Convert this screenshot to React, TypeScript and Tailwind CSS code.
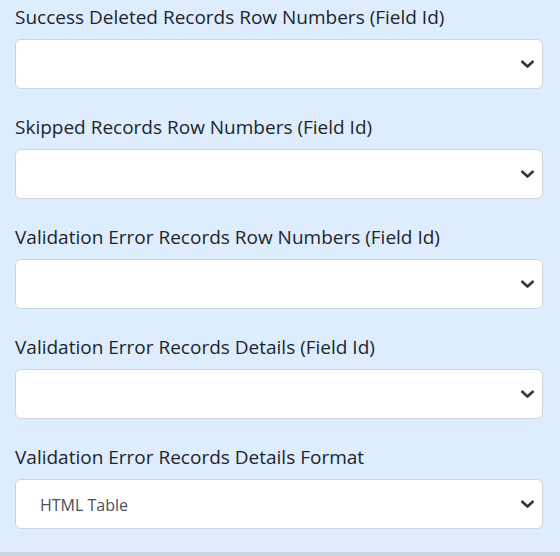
import React from "react";

const Chevron = () => (
  <svg width="15" height="10" viewBox="0 0 15 10" className="absolute right-[7px] top-1/2 -translate-y-1/2">
    <path d="M2.3 2.8 L7.5 7.6 L12.7 2.8" fill="none" stroke="#343a40" strokeWidth="2.7" strokeLinecap="round" strokeLinejoin="round" />
  </svg>
);

const fields: { label: string; value: string }[] = [
  { label: "Success Deleted Records Row Numbers (Field Id)", value: "" },
  { label: "Skipped Records Row Numbers (Field Id)", value: "" },
  { label: "Validation Error Records Row Numbers (Field Id)", value: "" },
  { label: "Validation Error Records Details (Field Id)", value: "" },
  { label: "Validation Error Records Details Format", value: "HTML Table" },
];

export default function App() {
  return (
    <div className="w-[560px] h-[556px] bg-[#deedfd] flex flex-col overflow-hidden" style={{ fontFamily: '"Open Sans", "Noto Sans", sans-serif' }}>
      <div className="flex flex-col px-[15px] pt-[4px] gap-[25px] flex-1">
        {fields.map((f) => (
          <div key={f.label} className="flex flex-col">
            <div className="text-[19px] leading-[26px] text-[#212529] mb-[9px]">{f.label}</div>
            <div className="relative h-[50px] w-[528px] bg-white border border-[#ced4da] rounded-[6px] flex items-center pl-[24px] pt-[2px]">
              <span className="text-[16px] text-[#495057]">{f.value}</span>
              <Chevron />
            </div>
          </div>
        ))}
      </div>
      <div className="h-[4px] bg-[#c9d5e1]" />
    </div>
  );
}
